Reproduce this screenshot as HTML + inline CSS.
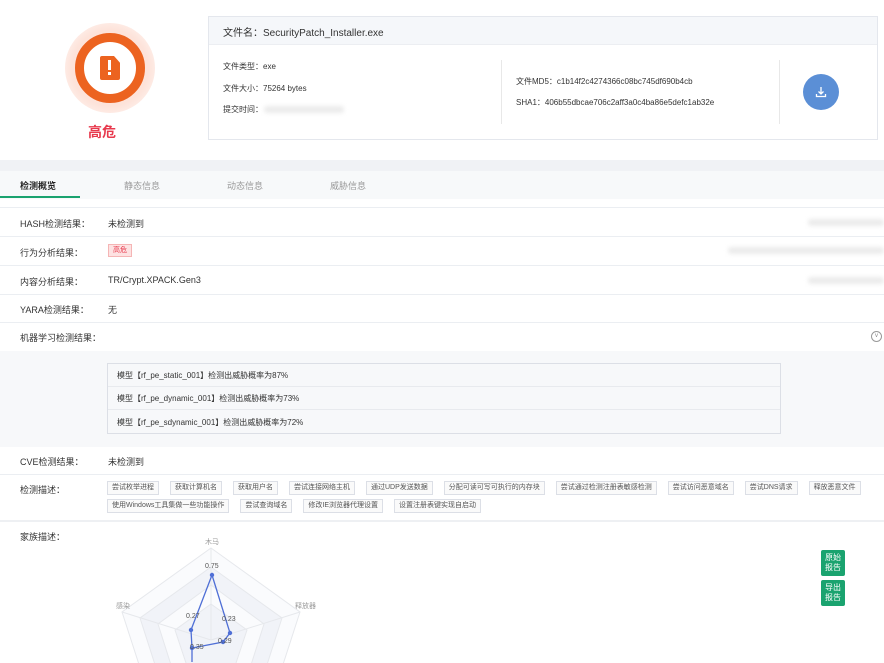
<!DOCTYPE html>
<html><head><meta charset="utf-8"><style>
*{margin:0;padding:0;box-sizing:border-box}
body{width:884px;height:663px;overflow:hidden;background:#fff;font-family:"Liberation Sans","Noto Sans CJK SC",sans-serif;color:#333;font-size:9px;position:relative}
.a{position:absolute}
.row{position:absolute;left:0;width:884px;border-top:1px solid #ebeef2}
.lbl{position:absolute;left:20px;font-size:9px;color:#333}
.val{position:absolute;left:108px;font-size:9px;color:#333}
.blur{position:absolute;height:7px;background:#ebebeb;filter:blur(2px);border-radius:3px}
.tag{display:inline-block;border:1px solid #dcdfe6;background:#fafafa;font-size:7px;color:#555;padding:0 4px;height:14px;line-height:12px;margin:0 11px 4px 0;white-space:nowrap}
</style></head><body>
<div class="a" style="left:65px;top:23px;width:90px;height:90px;border-radius:50%;background:radial-gradient(circle,#fde3da 60%,#fff 100%)"></div>
<div class="a" style="left:75px;top:33px;width:70px;height:70px;border-radius:50%;border:9px solid #ec6320;background:#fff"></div>
<div class="a" style="left:100px;top:56px;width:20px;height:24px;background:#ec6320;border-radius:2px;clip-path:polygon(0 0,70% 0,100% 28%,100% 100%,0 100%)"></div>
<div class="a" style="left:108px;top:60px;width:3px;height:10px;background:#fff"></div>
<div class="a" style="left:108px;top:72px;width:3px;height:3px;background:#fff"></div>
<div class="a" style="left:88px;top:122px;font-size:14px;font-weight:bold;color:#e8394d">高危</div>
<div class="a" style="left:208px;top:16px;width:670px;height:124px;border:1px solid #e4e7ed"></div>
<div class="a" style="left:209px;top:17px;width:668px;height:28px;background:#f5f7fa;border-bottom:1px solid #eceef2"></div>
<div class="a" style="left:223px;top:24px;font-size:10px;color:#333">文件名：SecurityPatch_Installer.exe</div>
<div class="a" style="left:223px;top:61px;font-size:8px">文件类型：exe</div>
<div class="a" style="left:223px;top:83px;font-size:8px">文件大小：75264 bytes</div>
<div class="a" style="left:223px;top:104px;font-size:8px">提交时间：</div>
<div class="blur" style="left:264px;top:106px;width:80px"></div>
<div class="a" style="left:501px;top:60px;width:1px;height:64px;background:#e8e8e8"></div>
<div class="a" style="left:516px;top:76px;font-size:8px">文件MD5：c1b14f2c4274366c08bc745df690b4cb</div>
<div class="a" style="left:516px;top:97px;font-size:8px">SHA1：406b55dbcae706c2aff3a0c4ba86e5defc1ab32e</div>
<div class="a" style="left:779px;top:60px;width:1px;height:64px;background:#e8e8e8"></div>
<div class="a" style="left:803px;top:74px;width:36px;height:36px;border-radius:50%;background:#5b8fd6"></div>
<svg class="a" style="left:814px;top:85px" width="14" height="14" viewBox="0 0 14 14" fill="none" stroke="#fff" stroke-width="1.3"><path d="M7 2v7M4.5 6.5L7 9l2.5-2.5M2.5 9v2.5h9V9"/></svg>
<div class="a" style="left:0;top:160px;width:884px;height:11px;background:#f0f2f5"></div>
<div class="a" style="left:0;top:171px;width:884px;height:28px;background:#f7f9fa"></div>
<div class="a" style="left:20px;top:179px;font-size:9px;font-weight:bold;color:#222">检测概览</div>
<div class="a" style="left:0;top:196px;width:80px;height:2px;background:#1aa36f"></div>
<div class="a" style="left:124px;top:179px;color:#999">静态信息</div>
<div class="a" style="left:227px;top:179px;color:#999">动态信息</div>
<div class="a" style="left:330px;top:179px;color:#999">威胁信息</div>
<div class="row" style="top:207px"></div>
<div class="lbl" style="top:217px">HASH检测结果：</div><div class="val" style="top:217px">未检测到</div>
<div class="blur" style="left:808px;top:219px;width:76px"></div>
<div class="row" style="top:236px"></div>
<div class="lbl" style="top:246px">行为分析结果：</div>
<div class="a" style="left:108px;top:244px;width:24px;height:13px;background:#fde2e2;border:1px solid #f5b5b5;color:#e8394d;font-size:7px;line-height:11px;text-align:center">高危</div>
<div class="blur" style="left:728px;top:247px;width:156px"></div>
<div class="row" style="top:265px"></div>
<div class="lbl" style="top:275px">内容分析结果：</div><div class="val" style="top:275px">TR/Crypt.XPACK.Gen3</div>
<div class="blur" style="left:808px;top:277px;width:76px"></div>
<div class="row" style="top:294px"></div>
<div class="lbl" style="top:303px">YARA检测结果：</div><div class="val" style="top:303px">无</div>
<div class="row" style="top:322px"></div>
<div class="lbl" style="top:331px">机器学习检测结果：</div>
<div class="a" style="left:871px;top:331px;width:11px;height:11px;border:1px solid #999;border-radius:50%;font-size:6px;line-height:9px;text-align:center;color:#888">v</div>
<div class="a" style="left:0;top:351px;width:884px;height:96px;background:#f7f8fa"></div>
<div class="a" style="left:107px;top:363px;width:674px;height:71px;border:1px solid #dcdfe6;background:#f7f8fa"></div>
<div class="a" style="left:108px;top:386px;width:672px;height:1px;background:#e8eaee"></div>
<div class="a" style="left:108px;top:409px;width:672px;height:1px;background:#e8eaee"></div>
<div class="a" style="left:117px;top:370px;font-size:8px">模型【rf_pe_static_001】检测出威胁概率为87%</div>
<div class="a" style="left:117px;top:393px;font-size:8px">模型【rf_pe_dynamic_001】检测出威胁概率为73%</div>
<div class="a" style="left:117px;top:417px;font-size:8px">模型【rf_pe_sdynamic_001】检测出威胁概率为72%</div>
<div class="lbl" style="top:455px">CVE检测结果：</div><div class="val" style="top:455px">未检测到</div>
<div class="row" style="top:474px"></div>
<div class="lbl" style="top:483px">检测描述：</div>
<div class="a" style="left:107px;top:481px;width:777px;font-size:0;white-space:nowrap">
<span class="tag">尝试枚举进程</span><span class="tag">获取计算机名</span><span class="tag">获取用户名</span><span class="tag">尝试连接网络主机</span><span class="tag">通过UDP发送数据</span><span class="tag">分配可读可写可执行的内存块</span><span class="tag">尝试通过检测注册表敏感检测</span><span class="tag">尝试访问恶意域名</span><span class="tag">尝试DNS请求</span><span class="tag">释放恶意文件</span><br><span class="tag">使用Windows工具集做一些功能操作</span><span class="tag">尝试查询域名</span><span class="tag">修改IE浏览器代理设置</span><span class="tag">设置注册表键实现自启动</span>
</div>
<div class="row" style="top:520px;border-top:2px solid #eef0f3"></div>
<div class="lbl" style="top:530px">家族描述：</div>
<svg class="a" style="left:0;top:530px" width="420" height="133">
<g fill="none" stroke="#e6e8ec">
<polygon points="211,18 300,82 266,187 156,187 122,82" fill="#fafbfd"/>
<polygon points="211,37 282,88 255,172 167,172 140,88" fill="#f1f3f8"/>
<polygon points="211,55 264,94 244,157 178,157 158,94" fill="#fafbfd"/>
<polygon points="211,74 247,100 233,142 189,142 175,100" fill="#f1f3f8"/>
<line x1="211" y1="110" x2="211" y2="18"/><line x1="211" y1="110" x2="300" y2="82"/><line x1="211" y1="110" x2="122" y2="82"/>
</g>
<polyline points="212,45 230,103 223,112 192,118 192,132" fill="none" stroke="#4f6fd6" stroke-width="1.3"/>
<polyline points="212,45 191,100 192,118" fill="none" stroke="#4f6fd6" stroke-width="1.3"/>
<g fill="#4f6fd6"><circle cx="212" cy="45" r="2.2"/><circle cx="230" cy="103" r="2.2"/><circle cx="223" cy="112" r="2.2"/><circle cx="192" cy="118" r="2.2"/><circle cx="191" cy="100" r="2.2"/></g>
<g font-size="7" fill="#999" font-family="Liberation Sans,Noto Sans CJK SC,sans-serif"><text x="205" y="14">木马</text><text x="295" y="78">释放器</text><text x="116" y="78">感染</text></g>
<g font-size="7" fill="#555" font-family="Liberation Sans,sans-serif"><text x="205" y="38">0.75</text><text x="186" y="88">0.27</text><text x="222" y="91">0.23</text><text x="218" y="113">0.29</text><text x="190" y="119">0.35</text></g>
</svg>
<div class="a" style="left:821px;top:550px;width:24px;height:26px;background:#1aa36f;border-radius:2px;color:#fff;font-size:8px;line-height:10px;text-align:center;padding-top:3px">原始<br>报告</div>
<div class="a" style="left:821px;top:580px;width:24px;height:26px;background:#1aa36f;border-radius:2px;color:#fff;font-size:8px;line-height:10px;text-align:center;padding-top:3px">导出<br>报告</div>
</body></html>
